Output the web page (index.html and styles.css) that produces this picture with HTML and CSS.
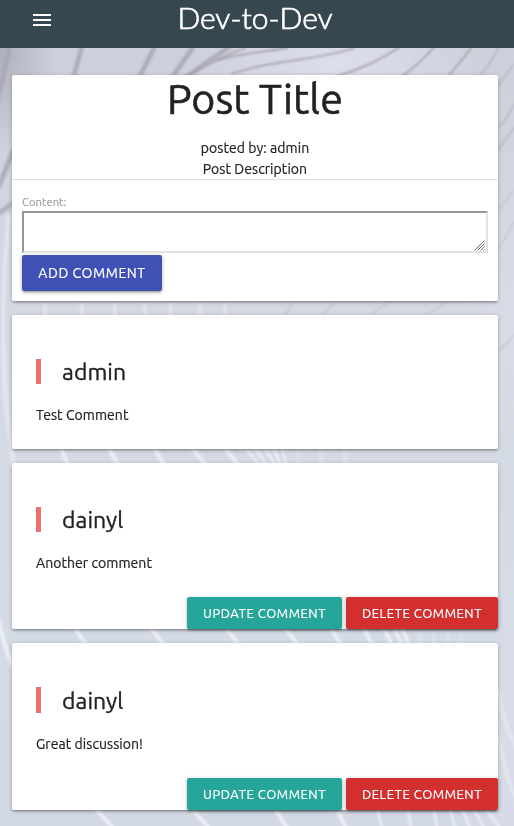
FILE: index.html
```html
<!DOCTYPE html>
<html lang="en">
<head>
<meta charset="utf-8">
<title>Dev-to-Dev</title>
<link rel="stylesheet" href="styles.css">
</head>
<body>
<svg class="backdrop" viewBox="0 0 514 826" preserveAspectRatio="none" aria-hidden="true">
  <defs>
    <linearGradient id="base" x1="0" y1="0" x2="0" y2="1">
      <stop offset="0" stop-color="#cccfd9"/><stop offset=".2" stop-color="#cfd4df"/>
      <stop offset=".4" stop-color="#d4d9e2"/><stop offset=".7" stop-color="#d5dce6"/><stop offset="1" stop-color="#d2d8e4"/>
    </linearGradient>
    <radialGradient id="shade"><stop offset="0" stop-color="#a6a6b5"/><stop offset="1" stop-color="#a6a6b5" stop-opacity="0"/></radialGradient>
    <radialGradient id="light"><stop offset="0" stop-color="#dddeeb"/><stop offset="1" stop-color="#dddeeb" stop-opacity="0"/></radialGradient>
    <filter id="soft"><feGaussianBlur stdDeviation="1.8"/></filter>
    <filter id="fine"><feGaussianBlur stdDeviation=".8"/></filter>
  </defs>
  <rect width="514" height="826" fill="url(#base)"/>
  <ellipse cx="0" cy="45" rx="55" ry="110" fill="url(#shade)" opacity=".8"/>
  <ellipse cx="335" cy="62" rx="150" ry="60" fill="url(#light)"/>
  <ellipse cx="514" cy="300" rx="60" ry="160" fill="url(#light)" opacity=".6"/>
  <ellipse cx="514" cy="750" rx="60" ry="200" fill="url(#light)" opacity=".6"/>
  <g fill="none" stroke="#a8a6b4" filter="url(#soft)">
    <path stroke-width="4" d="M10 46L-8 125M82 46L70 90M155 46L138 80M194 46L170 80M231 46Q205 63 182 80M13 150Q5 172-2 188M13 203L-2 214"/>
  </g>
  <g fill="none" stroke="#a7a1ae" stroke-width="1.8" filter="url(#fine)">
    <path d="M188 76C220 53 245 55 288 48M246 48Q220 56 190 75M231 74C275 59 315 61 355 48M337 76Q370 67 400 47M402 76Q420 64 434 47M448 76Q461 62 472 47"/>
    <path stroke="#b9b7c5" d="M480 76Q492 61 499 47M498 86L514 64M498 128Q508 118 514 104M498 150L514 128"/>
    <path stroke="#c5c9d3" d="M285 316L294 301M322 316L335 301M370 316L390 300M425 316L450 300M498 210L514 190M498 250L514 222M498 352L514 335"/>
  </g>
  <path fill="none" stroke="#e4e8f0" stroke-width="4" filter="url(#soft)" d="M9 215Q-5 350 14 468"/>
  <g fill="none" stroke="#eceff7" stroke-width="4" filter="url(#fine)">
    <path stroke="#e0e4ec" d="M45 303V316M82 303V316M115 303V316M144 303L146 316M170 303L171 316M200 303V316M225 303V316"/>
    <path d="M61 448L68 465M109 448L118 465M154 448L164 465M192 448L206 465M225 448L238 465"/>
    <path stroke-width="2.5" d="M246 448L259 465M255 448L267 465M265 448L275 465M274 448L280 465M282 448L286 465"/>
    <path d="M-2 618Q5 650 13 666M75 628L86 645M151 628L164 645M226 628L239 645M285 628L298 645M331 628L341 645M364 628L372 645M384 628L392 645M394 628L402 645M402 628L409 645"/>
    <path d="M96 809L113 828M192 809L209 828M275 809L287 828M337 809L346 828"/>
    <path stroke-width="2.5" d="M377 809L382 828M408 809L411 828M434 809L437 828M450 809L455 828M462 809L470 828M474 809L484 828M486 809L500 828"/>
    <path stroke="#dce2ec" d="M298 448V465M321 448V465M345 448V465M420 629V644M434 629V644M448 629V644M461 629V644"/>
    <path stroke="#e0e5ef" d="M498 690Q505 730 516 745M498 735Q508 785 516 798"/>
  </g>
</svg>

<header class="navbar">
  <svg class="menu" viewBox="0 0 24 24" aria-hidden="true"><path d="M3 18h18v-2H3v2zm0-5h18v-2H3v2zm0-7v2h18V6H3z"/></svg>
  <span class="brand">Dev-to-Dev</span>
</header>

<main class="feed">
  <section class="card post">
    <div class="post-head">
      <h1>Post Title</h1>
      <p>posted by: admin</p>
      <p>Post Description</p>
    </div>
    <form class="form">
      <label for="content">Content:</label>
      <div class="field">
        <textarea id="content"></textarea>
        <svg class="grip" viewBox="0 0 11 11" aria-hidden="true"><path d="M.5 10.5l10-10M3.5 10.5l7-7M6.5 10.5l4-4M9.5 10.5l1-1"/></svg>
      </div>
      <button class="btn add" type="button">Add comment</button>
    </form>
  </section>

  <article class="card comment">
    <h2>admin</h2>
    <p>Test Comment</p>
  </article>

  <article class="card comment owned">
    <h2>dainyl</h2>
    <p>Another comment</p>
    <div class="actions">
      <button class="btn update" type="button">Update comment</button>
      <button class="btn delete" type="button">Delete comment</button>
    </div>
  </article>

  <article class="card comment owned last">
    <h2>dainyl</h2>
    <p>Great discussion!</p>
    <div class="actions">
      <button class="btn update" type="button">Update comment</button>
      <button class="btn delete" type="button">Delete comment</button>
    </div>
  </article>
</main>
</body>
</html>
```

FILE: styles.css
```css
* { box-sizing: border-box; }
html, body { height: 100%; overflow: hidden; }
body {
  margin: 0;
  font-family: Ubuntu, "Noto Sans", sans-serif;
  font-size: 14px;
  font-weight: 400;
  line-height: 21px;
  letter-spacing: .06px;
  -webkit-text-stroke: .2px;
  color: #222;
}
h1, h2, p { margin: 0; font-weight: inherit; white-space: nowrap; }
p { position: relative; top: 1px; }

.backdrop { position: fixed; inset: 0; width: 100%; height: 100%; z-index: -1; }

.navbar {
  display: grid;
  grid-template-columns: 84px 1fr 88px;
  height: 48px;
  background: #37474f;
  color: #fff;
}
.menu { width: 24px; height: 24px; margin: 8px 0 0 30px; fill: #fff; }
.brand {
  justify-self: center;
  font-family: Lato, sans-serif;
  font-size: 30px;
  font-weight: 300;
  letter-spacing: 0;
  -webkit-text-stroke: .7px;
  line-height: 35px;
  white-space: nowrap;
}

.feed { display: flex; flex-direction: column; gap: 14px; padding: 27px 16px 0 12px; }
.card {
  flex: none;
  background: #fff;
  border-radius: 2px;
  box-shadow: 0 2px 2px 0 rgba(0,0,0,.14), 0 3px 1px -2px rgba(0,0,0,.12), 0 1px 5px 0 rgba(0,0,0,.2);
}

.post { height: 226px; }
.post-head { height: 105px; border-bottom: 1px solid #e0e0e0; text-align: center; }
.post-head h1 { height: 62px; font-size: 41.2px; line-height: 48px; -webkit-text-stroke: .6px; }
.form { display: flex; flex-direction: column; align-items: flex-start; padding: 12px 10px 0; }
.form label { height: 19px; font-size: 11.2px; line-height: 20px; color: #9e9e9e; }
.field { position: relative; width: 466px; height: 42px; margin-bottom: 2px; }
.form textarea {
  display: block;
  width: 100%;
  height: 100%;
  margin: 0;
  border: 2px solid;
  border-color: #959595 #e2e2e2 #e2e2e2 #959595;
  border-radius: 0;
  background: #fff;
  outline: 0;
  resize: none;
}
.grip { position: absolute; right: 3px; bottom: 2px; width: 11px; height: 11px; fill: none; stroke: #666; stroke-width: 1; pointer-events: none; }

.btn {
  border: 0;
  padding: 0;
  border-radius: 2px;
  color: #fff;
  font-family: inherit;
  font-weight: inherit;
  letter-spacing: .55px;
  text-transform: uppercase;
  white-space: nowrap;
  text-align: center;
  box-shadow: 0 2px 2px 0 rgba(0,0,0,.14), 0 3px 1px -2px rgba(0,0,0,.12), 0 1px 5px 0 rgba(0,0,0,.2);
}
.add { width: 140px; height: 36px; font-size: 14px; background: #3f51b5; }

.comment { display: flex; flex-direction: column; height: 134px; padding: 44px 0 0 24px; }
.comment h2 {
  height: 25px;
  margin-bottom: 20px;
  padding-left: 21px;
  border-left: 5px solid #ee6e73;
  font-size: 23px;
  line-height: 26px;
  -webkit-text-stroke: .35px;
}
.owned { height: 166px; }
.last { height: 167px; }
.last h2 { height: 26px; line-height: 27px; }
.actions { display: flex; justify-content: flex-end; gap: 4px; margin-top: auto; }
.actions .btn { height: 32px; font-size: 13px; }
.update { width: 155px; background: #26a69a; }
.delete { width: 152px; background: #d32f2f; }
```
